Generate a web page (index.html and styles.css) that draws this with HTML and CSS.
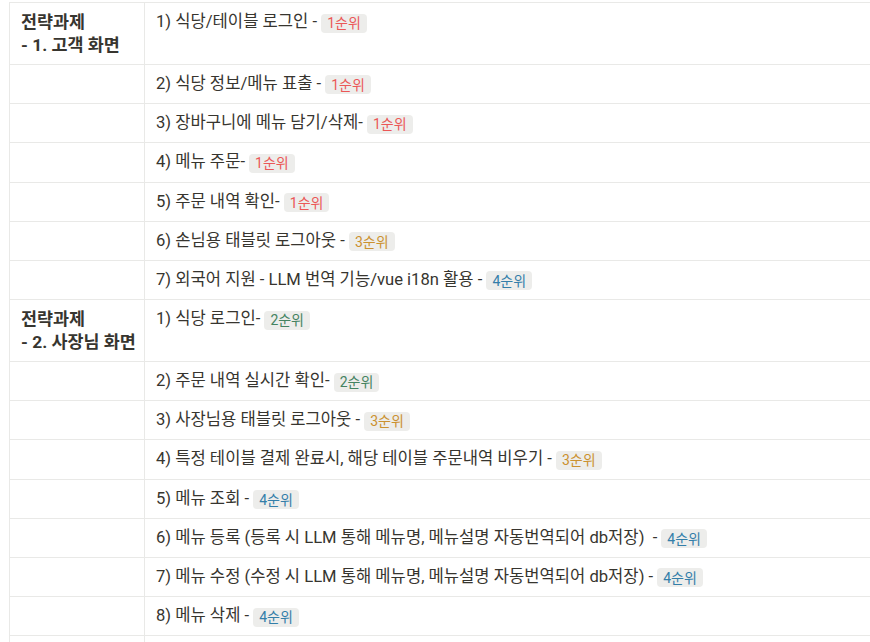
FILE: index.html
```html
<!DOCTYPE html>
<html lang="ko">
<head>
<meta charset="utf-8">
<link rel="stylesheet" href="styles.css">
</head>
<body>
<div class="page">
<table class="tasks">
  <colgroup><col class="c-head"><col class="c-item"></colgroup>
  <tbody>
    <tr class="double"><th>전략과제<br>- 1. 고객 화면</th><td>1) 식당/테이블 로그인 - <span class="tag red">1순위</span></td></tr>
    <tr><th></th><td>2) 식당 정보/메뉴 표출 - <span class="tag red">1순위</span></td></tr>
    <tr><th></th><td>3) 장바구니에 메뉴 담기/삭제- <span class="tag red">1순위</span></td></tr>
    <tr><th></th><td>4) 메뉴 주문- <span class="tag red">1순위</span></td></tr>
    <tr><th></th><td>5) 주문 내역 확인- <span class="tag red">1순위</span></td></tr>
    <tr><th></th><td>6) 손님용 태블릿 로그아웃 - <span class="tag gold">3순위</span></td></tr>
    <tr><th></th><td>7) 외국어 지원 - LLM 번역 기능/vue i18n 활용 - <span class="tag blue">4순위</span></td></tr>
    <tr class="double"><th>전략과제<br>- 2. 사장님 화면</th><td>1) 식당 로그인- <span class="tag green">2순위</span></td></tr>
    <tr><th></th><td>2) 주문 내역 실시간 확인- <span class="tag green">2순위</span></td></tr>
    <tr><th></th><td>3) 사장님용 태블릿 로그아웃 - <span class="tag gold">3순위</span></td></tr>
    <tr><th></th><td>4) 특정 테이블 결제 완료시, 해당 테이블 주문내역 비우기 - <span class="tag gold">3순위</span></td></tr>
    <tr><th></th><td>5) 메뉴 조회 - <span class="tag blue">4순위</span></td></tr>
    <tr><th></th><td>6) 메뉴 등록 (등록 시 LLM 통해 메뉴명, 메뉴설명 자동번역되어 db저장)&nbsp; - <span class="tag blue">4순위</span></td></tr>
    <tr><th></th><td>7) 메뉴 수정 (수정 시 LLM 통해 메뉴명, 메뉴설명 자동번역되어 db저장) - <span class="tag blue">4순위</span></td></tr>
    <tr><th></th><td>8) 메뉴 삭제 - <span class="tag blue">4순위</span></td></tr>
    <tr><th></th><td></td></tr>
  </tbody>
</table>
</div>
</body>
</html>
```

FILE: styles.css
```css
html, body {
  margin: 0;
  padding: 0;
  background: #ffffff;
  overflow: hidden;
}

.page {
  padding: 2px 0 0 9px;
  width: 1000px;
}

.tasks {
  border-collapse: collapse;
  table-layout: fixed;
  width: 950px;
  font-family: Roboto, "Noto Sans CJK KR", sans-serif;
  font-size: 16.6px;
  line-height: 22.75px;
  color: #37352f;
}

.c-head { width: 135px; }

.tasks th,
.tasks td {
  border: 1px solid #e9e9e7;
  padding: 8px 11px 7.45px 11px;
  text-align: left;
  vertical-align: top;
  white-space: nowrap;
}

.tasks th {
  font-weight: 700;
  font-size: 17.4px;
}

.tag {
  display: inline-block;
  font-size: 14px;
  line-height: 16px;
  padding: 1.5px 6px;
  border-radius: 4px;
  background: rgba(135, 131, 120, 0.15);
  vertical-align: -1px;
}

.red { color: #eb5757; }
.gold { color: #cb912f; }
.green { color: #448361; }
.blue { color: #337ea9; }
```
